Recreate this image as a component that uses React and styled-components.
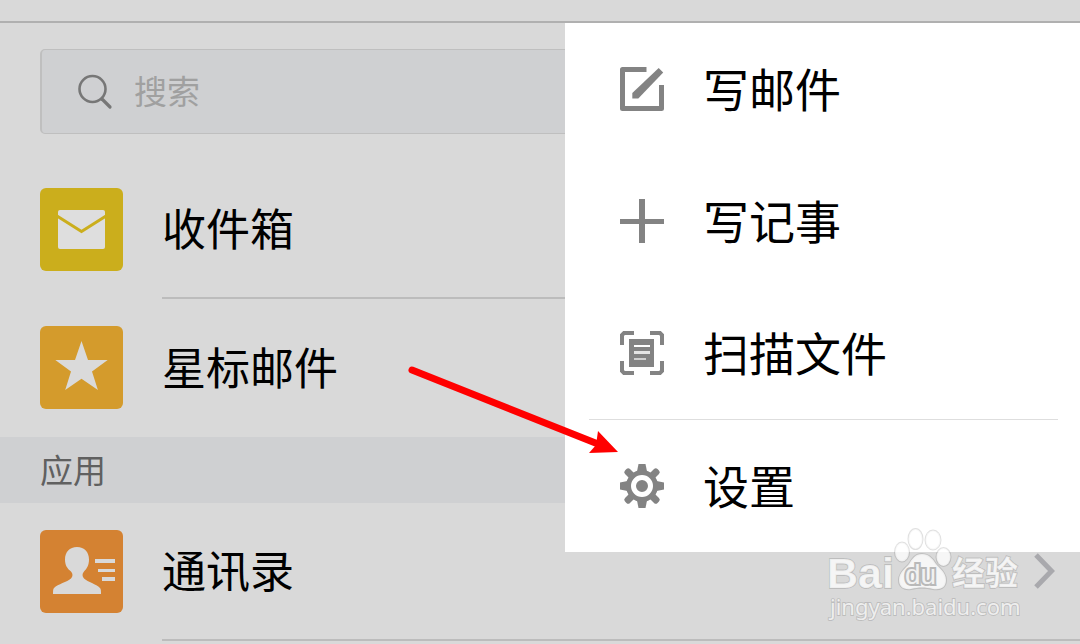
import React, { useState } from 'react'
import styled, { createGlobalStyle } from 'styled-components'

const GlobalStyle = createGlobalStyle`
  * {
    box-sizing: border-box;
  }

  body {
    margin: 0;
    background: #d9d9d9;
    color: #000;
    font-family: "Noto Sans CJK SC", "Noto Sans", sans-serif;
  }
`

const Page = styled.div`
  position: relative;
  min-height: 100vh;
  overflow: hidden;
`

const TopBar = styled.header`
  height: 23px;
  border-bottom: 2px solid #b0b0b0;
`

const SearchArea = styled.div`
  padding: 26px 40px 27px;
`

const SearchBox = styled.label`
  display: flex;
  align-items: center;
  gap: 20px;
  height: 85px;
  padding: 0 36px;
  background: #cfd0d2;
  border: 1px solid #bfbfbf;
  border-left-width: 2px;
  border-radius: 5px;
`

const SearchInput = styled.input`
  flex: 1;
  min-width: 0;
  padding: 0 0 4px;
  border: none;
  outline: none;
  background: none;
  color: #000;
  font: inherit;
  font-size: 33px;

  &::placeholder {
    color: #a0a0a0;
    opacity: 1;
  }
`

const FolderList = styled.ul`
  margin: 0;
  padding: 0;
  list-style: none;
`

const FolderLink = styled.a`
  display: flex;
  gap: 39px;
  height: 138px;
  padding-left: 40px;
  color: inherit;
  text-decoration: none;
`

const FolderIcon = styled.span`
  flex: none;
  width: 83px;
  height: 83px;
  margin-top: 27px;
  border-radius: 6px;
  background: ${props => props.$color};

  svg {
    display: block;
  }
`

const FolderBody = styled.span`
  display: flex;
  flex: 1;
  align-items: center;
  justify-content: space-between;
  padding-right: 24px;
  border-bottom: ${props => props.$last ? 'none' : '2px solid #bcbcbc'};
`

const Label = styled.span`
  padding-bottom: 4px;
  font-size: ${props => props.$size};
  line-height: 64px;
`

const SectionTitle = styled.h2`
  margin: 0;
  padding: 0 40px 2px;
  background: #cfd0d2;
  color: #606060;
  font-size: 33px;
  font-weight: 400;
  line-height: 64px;
`

const Menu = styled.div`
  position: absolute;
  top: 23px;
  right: 0;
  width: 515px;
  background: #fff;
`

const MenuItem = styled.button`
  display: flex;
  align-items: center;
  gap: 39px;
  width: 100%;
  height: 132px;
  padding: 0 55px;
  border: none;
  background: none;
  color: #000;
  font: inherit;
  text-align: left;
  cursor: pointer;
`

const MenuDivider = styled.hr`
  height: 1px;
  margin: 0 22px 0 24px;
  border: none;
  background: #dedede;
`

const Arrow = styled.svg`
  position: absolute;
  top: 360px;
  right: 460px;
  pointer-events: none;
`

const Watermark = styled.svg`
  position: absolute;
  top: 524px;
  right: 54px;
  pointer-events: none;
`

const SearchIcon = () => (
  <svg width="36" height="36" viewBox="0 0 36 36" fill="none" stroke="#777" strokeWidth="2.600" aria-hidden="true">
    <circle cx="14.500" cy="15" r="13" />
    <path d="M24 25l8 8" strokeWidth="3.200" strokeLinecap="round" />
  </svg>
)

const MailIcon = () => (
  <svg width="83" height="83" viewBox="0 0 83 83" aria-hidden="true">
    <rect x="18" y="22" width="47" height="39" rx="2" fill="#dedede" />
    <path d="M17 28l24.500 15.500L66 28" fill="none" stroke="#cbae1c" strokeWidth="3" />
  </svg>
)

const StarIcon = () => (
  <svg width="83" height="83" viewBox="0 0 83 83" aria-hidden="true">
    <path d="M41.500 15l6.500 19h19.700L52 45.500l5.900 18.500-16.400-11.200L25.200 64 31 45.500 15.300 34H35z" fill="#dadada" />
  </svg>
)

const ContactIcon = () => (
  <svg width="83" height="83" viewBox="0 0 83 83" fill="#d9d9d9" aria-hidden="true">
    <path d="M37 17c7.500 0 12 5 12 12.500 0 5.500-2 9-5 12-2 2-2 5 0 7 4 3.500 12 5.500 16 9.500 1 1 1 3 1 6H13c0-3 0-5 1-6 4-4 13-6 17-9.500 2-2 2-5 0-7-4-3-6-6.500-6-12C25 22 29.500 17 37 17z" />
    <path d="M55 29h20v4H55zM58 39h17v3H58zM62 47h13v4H62z" />
  </svg>
)

const WriteIcon = () => (
  <svg width="44" height="44" viewBox="0 0 44 44" aria-hidden="true">
    <path d="M26.500 2.500H2.500v39h39V18" fill="none" stroke="#838383" strokeWidth="5" strokeLinejoin="round" />
    <path d="M38.700 1l4.500 4.500L18.300 31.500h-6V26z" fill="#838383" />
  </svg>
)

const PlusIcon = () => (
  <svg width="44" height="44" viewBox="0 0 44 44" fill="#838383" aria-hidden="true">
    <path d="M19 0h6v20h19v5H25v19h-6V25H0v-5h19z" />
  </svg>
)

const ScanIcon = () => (
  <svg width="44" height="44" viewBox="0 0 44 44" aria-hidden="true">
    <path d="M14 2H4L2 4v10M30 2h10l2 2v10M14 42H4l-2-2V30M30 42h10l2-2V30" fill="none" stroke="#838383" strokeWidth="4" />
    <path d="M9 8h25v28H9z" fill="#838383" />
    <path d="M14 14h16v2H14z" fill="#fff" />
    <path d="M14 20h16v3H14z" fill="#e4e4e4" />
    <path d="M14 27h12v2H14z" fill="#d0d0d0" />
  </svg>
)

const GearIcon = () => (
  <svg width="44" height="44" viewBox="0 0 44 44" aria-hidden="true">
    <g fill="#838383">
      {[0, 90].map(angle => (
        <path key={angle} d="M18.500 0h7l2 10v24l-2 10h-7l-2-10V10z" transform={`rotate(${angle} 22 22)`} />
      ))}
      {[45, 135].map(angle => (
        <rect key={angle} x="18.500" y="-1" width="7" height="46" rx="2.500" transform={`rotate(${angle} 22 22)`} />
      ))}
      <circle cx="22" cy="22" r="16" />
    </g>
    <circle cx="22" cy="22" r="8.500" fill="none" stroke="#fff" strokeWidth="5" />
  </svg>
)

const Chevron = () => (
  <svg width="24" height="40" viewBox="0 0 24 40" fill="none" stroke="#a9a9ad" strokeWidth="5" aria-hidden="true">
    <path d="M4 4l15.500 16L4 36" />
  </svg>
)

const folders = [
  { name: '收件箱', color: '#cbae1c', icon: <MailIcon /> },
  { name: '星标邮件', color: '#d49b2c', icon: <StarIcon />, last: true },
]

const apps = [
  { name: '通讯录', color: '#d48232', icon: <ContactIcon />, chevron: true },
]

function Folders({ items }) {
  return (
    <FolderList>
      {items.map(item => (
        <li key={item.name}>
          <FolderLink href="#">
            <FolderIcon $color={item.color}>{item.icon}</FolderIcon>
            <FolderBody $last={item.last}>
              <Label $size="44px">{item.name}</Label>
              {item.chevron && <Chevron />}
            </FolderBody>
          </FolderLink>
        </li>
      ))}
    </FolderList>
  )
}

function MenuAction({ icon, children }) {
  return (
    <MenuItem type="button" role="menuitem">
      {icon}
      <Label $size="46px">{children}</Label>
    </MenuItem>
  )
}

function BaiduMark() {
  return (
    <Watermark
      width="202"
      height="100"
      viewBox="0 0 202 100"
      fill="#fff"
      fillOpacity="0.75"
      stroke="#000"
      strokeOpacity="0.12"
      strokeWidth="2"
      paintOrder="stroke"
    >
      <text x="3" y="64" fontSize="43" fontFamily="Liberation Sans, sans-serif" fontWeight="700">Bai</text>
      <ellipse cx="78" cy="28" rx="7" ry="9.500" />
      <ellipse cx="91.500" cy="15" rx="7" ry="10" />
      <ellipse cx="109" cy="16" rx="7.500" ry="9.500" />
      <ellipse cx="119.500" cy="33" rx="7" ry="9" />
      <path d="M98 30c7 0 11 5 14 10 3 4 10 8 10 16 0 8-6 10-13 9-8-2-14-2-22 0-7 1-12-2-12-9 0-8 7-12 10-16 3-5 6-10 13-10z" />
      <text x="81" y="60" fontSize="28" fontFamily="Liberation Sans, sans-serif" fill="#f1f1f1" fillOpacity="1" stroke="#b9b9b9" strokeOpacity="1" strokeWidth="4">du</text>
      <text x="128" y="61" fontSize="33" fontFamily="Noto Sans CJK SC, sans-serif" fontWeight="700">经验</text>
      <text x="6" y="91" fontSize="22" fontFamily="Noto Sans, sans-serif">jingyan.baidu.com</text>
    </Watermark>
  )
}

export default function App() {
  const [query, setQuery] = useState('')

  return (
    <Page>
      <GlobalStyle />
      <TopBar />
      <main>
        <SearchArea>
          <SearchBox>
            <SearchIcon />
            <SearchInput
              type="text"
              aria-label="搜索"
              placeholder="搜索"
              value={query}
              onChange={e => setQuery(e.target.value)}
            />
          </SearchBox>
        </SearchArea>
        <Folders items={folders} />
        <SectionTitle>应用</SectionTitle>
        <Folders items={apps} />
      </main>
      <Menu role="menu">
        <MenuAction icon={<WriteIcon />}>写邮件</MenuAction>
        <MenuAction icon={<PlusIcon />}>写记事</MenuAction>
        <MenuAction icon={<ScanIcon />}>扫描文件</MenuAction>
        <MenuDivider />
        <MenuAction icon={<GearIcon />}>设置</MenuAction>
      </Menu>
      <Arrow width="214" height="100" viewBox="0 0 214 100" aria-hidden="true">
        <path d="M6 10l186 74" stroke="#f00" strokeWidth="7" strokeLinecap="round" />
        <path d="M192 71l20 21-29 1 7-8z" fill="#f00" />
      </Arrow>
      <BaiduMark />
    </Page>
  )
}
